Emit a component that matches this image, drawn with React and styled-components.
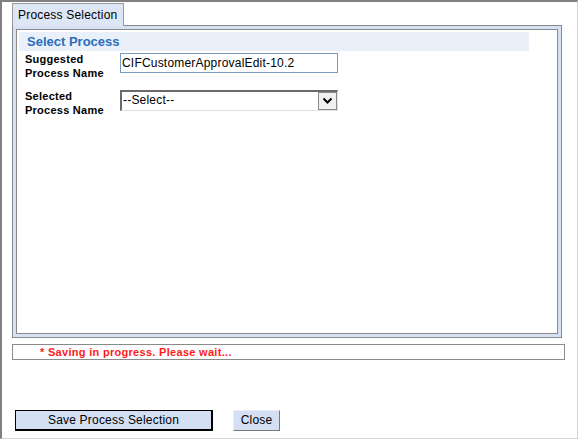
import React from "react";
import styled, { createGlobalStyle } from "styled-components";

const Global = createGlobalStyle`
  html, body { margin: 0; padding: 0; background: #fff; }
  body { font-family: "Liberation Sans", Arial, sans-serif; }
`;

const Frame = styled.div`
  box-sizing: border-box;
  width: 578px;
  height: 439px;
  border-top: 2px solid #808080;
  border-left: 2px solid #808080;
  border-right: 1px solid #d4d4d4;
  border-bottom: 1px solid #d4d4d4;
  padding: 1px 0 0 10px;
  display: flex;
  flex-direction: column;
`;

const TabStrip = styled.div`
  display: flex;
  height: 22px;
`;

const Tab = styled.div`
  box-sizing: border-box;
  height: 23px;
  padding: 0 6px 0 5px;
  background: #dce6f5;
  border: 1px solid #9a9a9a;
  border-bottom: none;
  font-size: 12px;
  letter-spacing: 0.2px;
  line-height: 22px;
  color: #000;
  position: relative;
  z-index: 1;
`;

const Panel = styled.div`
  box-sizing: border-box;
  width: 550px;
  height: 313px;
  border: 1px solid #8a8a8a;
  background: #d6e1f3;
  padding: 3px;
`;

const Inner = styled.div`
  box-sizing: border-box;
  height: 100%;
  border: 1px solid #8a8a8a;
  background: #fff;
  padding: 2px 0 0 2px;
`;

const SectionHeader = styled.div`
  width: 510px;
  height: 19px;
  background: #eaf0f9;
  color: #2a6ebb;
  font-weight: bold;
  font-size: 13px;
  line-height: 20px;
  padding-left: 8px;
  box-sizing: border-box;
`;

const Row = styled.div`
  display: flex;
  align-items: flex-start;
  margin-top: ${(p) => p.$top}px;
`;

const Label = styled.div`
  width: 95px;
  padding-left: 6px;
  font-size: 11px;
  font-weight: bold;
  letter-spacing: 0.25px;
  line-height: 14px;
  color: #000;
`;

const TextInput = styled.div`
  box-sizing: border-box;
  width: 218px;
  height: 20px;
  margin-top: ${(p) => p.$top || 0}px;
  border: 1px solid #7a9cc0;
  font-size: 12px;
  letter-spacing: 0.2px;
  line-height: 18px;
  padding-left: 1px;
  color: #000;
`;

const SelectBox = styled.div`
  box-sizing: border-box;
  width: 218px;
  height: 21px;
  margin-top: 1px;
  border-top: 2px solid #6a6a6a;
  border-left: 2px solid #6a6a6a;
  border-right: 1px solid #e0e0e0;
  border-bottom: 1px solid #e0e0e0;
  display: flex;
  font-size: 12px;
  letter-spacing: 0.2px;
  line-height: 17px;
`;

const SelectText = styled.div`
  flex: 1;
  padding-left: 1px;
`;

const DropButton = styled.div`
  box-sizing: border-box;
  width: 19px;
  height: 18px;
  border: 1px solid #8a8a8a;
  background: #f0f0f0;
  display: flex;
  align-items: center;
  justify-content: center;
`;

const StatusBar = styled.div`
  box-sizing: border-box;
  width: 553px;
  height: 16px;
  margin-top: 6px;
  border: 1px solid #8a8a8a;
  color: #ff1a1a;
  font-size: 11px;
  font-weight: bold;
  letter-spacing: 0.3px;
  line-height: 14px;
  padding-left: 27px;
`;

const ButtonRow = styled.div`
  display: flex;
  gap: 20px;
  margin-top: auto;
  margin-bottom: 7px;
  padding-left: 3px;
`;

const Button = styled.div`
  box-sizing: border-box;
  width: ${(p) => p.$w}px;
  height: 21px;
  background: #d4dff4;
  border-top: 1px solid #e8eef9;
  border-left: 1px solid #e8eef9;
  border-right: ${(p) => (p.$strong ? "2px solid #000" : "1px solid #7a7a7a")};
  border-bottom: ${(p) => (p.$strong ? "2px solid #000" : "1px solid #7a7a7a")};
  outline: ${(p) => (p.$strong ? "1px solid #000" : "none")};
  outline-offset: -1px;
  font-size: 12px;
  letter-spacing: 0.2px;
  line-height: 18px;
  text-align: center;
  color: #000;
`;

export default function App() {
  return (
    <>
      <Global />
      <Frame>
        <TabStrip>
          <Tab>Process Selection</Tab>
        </TabStrip>
        <Panel>
          <Inner>
            <SectionHeader>Select Process</SectionHeader>
            <Row $top={1}>
              <Label>
                Suggested
                <br />
                Process Name
              </Label>
              <TextInput $top={1}>CIFCustomerApprovalEdit-10.2</TextInput>
            </Row>
            <Row $top={9}>
              <Label>
                Selected
                <br />
                Process Name
              </Label>
              <SelectBox>
                <SelectText>--Select--</SelectText>
                <DropButton>
                  <svg width="11" height="8" viewBox="0 0 11 8">
                    <path d="M1.5 1.5 L5.5 5.5 L9.5 1.5" fill="none" stroke="#000" strokeWidth="2" />
                  </svg>
                </DropButton>
              </SelectBox>
            </Row>
          </Inner>
        </Panel>
        <StatusBar>* Saving in progress. Please wait...</StatusBar>
        <ButtonRow>
          <Button $w={198} $strong>Save Process Selection</Button>
          <Button $w={47}>Close</Button>
        </ButtonRow>
      </Frame>
    </>
  );
}
